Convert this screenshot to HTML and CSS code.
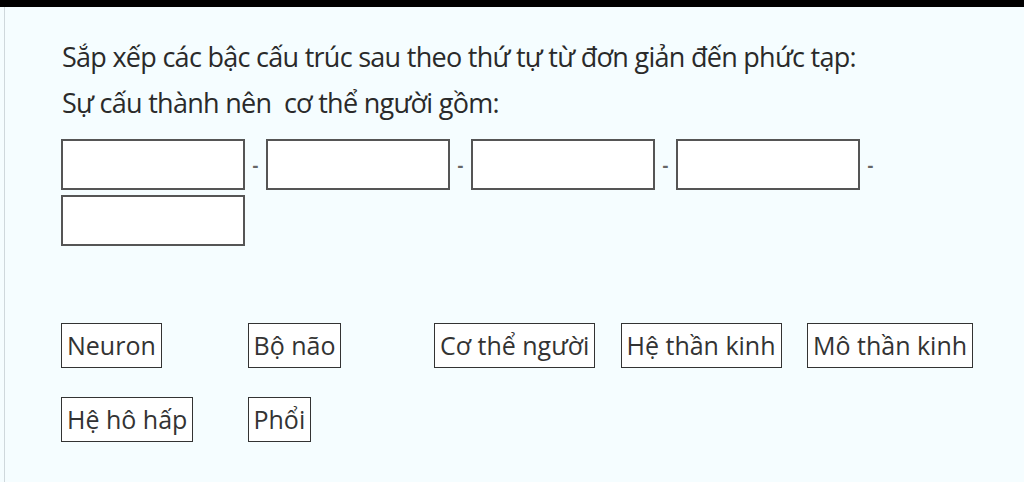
FILE: index.html
```html
<!DOCTYPE html>
<html>
<head>
    <title>Sắp xếp</title>
    <link rel="stylesheet" href="styles.css">
</head>
<body>
    <div class="topbar"></div>
    <div class="page">
        <p class="question">Sắp xếp các bậc cấu trúc sau theo thứ tự từ đơn giản đến phức tạp:</p>
        <p class="question">Sự cấu thành nên&nbsp; cơ thể người gồm:</p>
        <div class="answers">
            <div class="slot"></div><span class="dash">-</span>
            <div class="slot"></div><span class="dash">-</span>
            <div class="slot"></div><span class="dash">-</span>
            <div class="slot"></div><span class="dash">-</span>
            <div class="slot"></div>
        </div>
        <div class="choices">
            <div class="cell"><span class="chip">Neuron</span></div>
            <div class="cell"><span class="chip">Bộ não</span></div>
            <div class="cell"><span class="chip">Cơ thể người</span></div>
            <div class="cell"><span class="chip">Hệ thần kinh</span></div>
            <div class="cell"><span class="chip">Mô thần kinh</span></div>
            <div class="cell"><span class="chip">Hệ hô hấp</span></div>
            <div class="cell"><span class="chip">Phổi</span></div>
        </div>
    </div>
</body>
</html>
```

FILE: styles.css
```css
body {
    margin: 0;
    background-color: #f5fdff;
    font-family: "Open Sans", "Noto Sans", sans-serif;
    color: #333;
}
.topbar {
    height: 7px;
    background-color: #000;
}
.page {
    margin-left: 4px;
    border-left: 1px solid #cfd8dc;
    height: 475px;
    padding: 31px 0 0 56px;
    box-sizing: border-box;
}
.question {
    margin: 0 0 8px 1px;
    font-size: 27px;
    line-height: 38px;
    letter-spacing: -0.72px;
    color: #2a2a2a;
}
.answers {
    display: flex;
    flex-wrap: wrap;
    align-items: center;
    row-gap: 5px;
    width: 840px;
    margin-top: 17px;
}
.slot {
    width: 184px;
    height: 51px;
    box-sizing: border-box;
    background-color: #fff;
    border: 2px solid #555;
}
.dash {
    width: 21px;
    text-align: center;
    font-size: 18px;
    font-weight: bold;
    color: #666;
}
.choices {
    display: grid;
    grid-template-columns: repeat(5, 186.5px);
    row-gap: 29px;
    margin-top: 77px;
}
.cell {
    display: flex;
}
.chip {
    height: 45px;
    box-sizing: border-box;
    padding: 0 5px;
    background-color: #fff;
    border: 1.5px solid #333;
    font-size: 25px;
    line-height: 42px;
    color: #333;
}
```
